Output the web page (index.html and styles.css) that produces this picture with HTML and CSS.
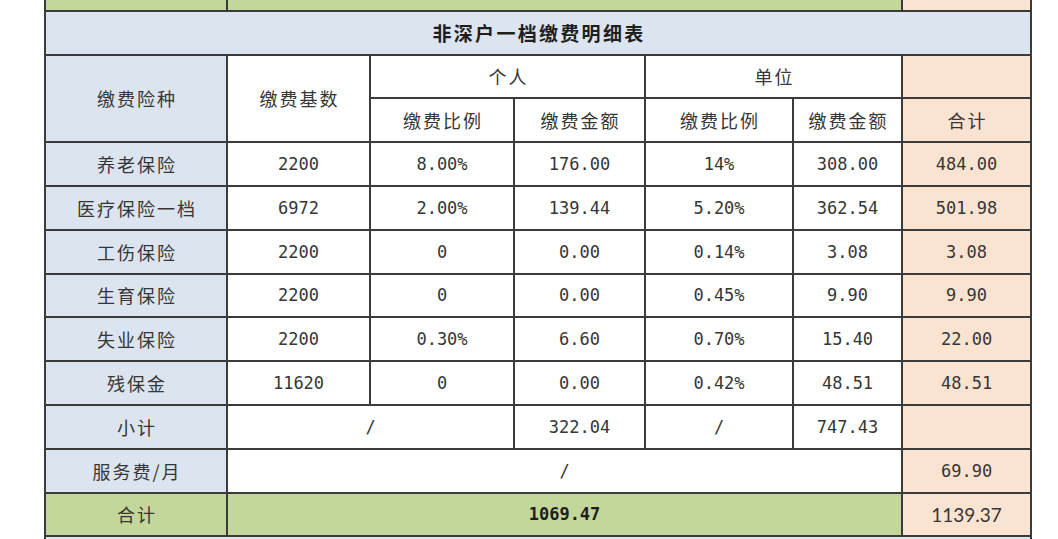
FILE: index.html
```html
<!DOCTYPE html>
<html lang="zh-CN">
<head>
<meta charset="utf-8">
<title>非深户一档缴费明细表</title>
<link rel="stylesheet" href="styles.css">
</head>
<body>
<div class="wrap">
<table class="fee">
  <colgroup>
    <col class="c1"><col class="c2"><col class="c3"><col class="c4"><col class="c5"><col class="c6"><col class="c7">
  </colgroup>
  <tr class="cut-top">
    <td class="green"></td>
    <td class="green" colspan="5"></td>
    <td class="peach"></td>
  </tr>
  <tr>
    <td class="blue title" colspan="7">非深户一档缴费明细表</td>
  </tr>
  <tr>
    <td class="blue cn" rowspan="2">缴费险种</td>
    <td class="cn" rowspan="2">缴费基数</td>
    <td class="cn" colspan="2">个人</td>
    <td class="cn" colspan="2">单位</td>
    <td class="peach"></td>
  </tr>
  <tr>
    <td class="cn">缴费比例</td>
    <td class="cn">缴费金额</td>
    <td class="cn">缴费比例</td>
    <td class="cn">缴费金额</td>
    <td class="peach cn">合计</td>
  </tr>
  <tr>
    <td class="blue cn">养老保险</td>
    <td class="num">2200</td><td class="num">8.00%</td><td class="num">176.00</td>
    <td class="num">14%</td><td class="num">308.00</td><td class="peach num">484.00</td>
  </tr>
  <tr>
    <td class="blue cn">医疗保险一档</td>
    <td class="num">6972</td><td class="num">2.00%</td><td class="num">139.44</td>
    <td class="num">5.20%</td><td class="num">362.54</td><td class="peach num">501.98</td>
  </tr>
  <tr>
    <td class="blue cn">工伤保险</td>
    <td class="num">2200</td><td class="num">0</td><td class="num">0.00</td>
    <td class="num">0.14%</td><td class="num">3.08</td><td class="peach num">3.08</td>
  </tr>
  <tr>
    <td class="blue cn">生育保险</td>
    <td class="num">2200</td><td class="num">0</td><td class="num">0.00</td>
    <td class="num">0.45%</td><td class="num">9.90</td><td class="peach num">9.90</td>
  </tr>
  <tr>
    <td class="blue cn">失业保险</td>
    <td class="num">2200</td><td class="num">0.30%</td><td class="num">6.60</td>
    <td class="num">0.70%</td><td class="num">15.40</td><td class="peach num">22.00</td>
  </tr>
  <tr>
    <td class="blue cn">残保金</td>
    <td class="num">11620</td><td class="num">0</td><td class="num">0.00</td>
    <td class="num">0.42%</td><td class="num">48.51</td><td class="peach num">48.51</td>
  </tr>
  <tr>
    <td class="blue cn">小计</td>
    <td class="num" colspan="2">/</td><td class="num">322.04</td>
    <td class="num">/</td><td class="num">747.43</td><td class="peach"></td>
  </tr>
  <tr>
    <td class="blue cn">服务费/月</td>
    <td class="num" colspan="5">/</td>
    <td class="peach num">69.90</td>
  </tr>
  <tr>
    <td class="green cn">合计</td>
    <td class="green num bold" colspan="5">1069.47</td>
    <td class="peach total">1139.37</td>
  </tr>
  <tr class="cut-bottom">
    <td class="blue" colspan="7"></td>
  </tr>
</table>
</div>
</body>
</html>
```

FILE: styles.css
```css
html, body {
  margin: 0;
  padding: 0;
  background: #ffffff;
  overflow: hidden;
}

.wrap {
  width: 1058px;
  height: 539px;
  overflow: hidden;
  padding-left: 44px;
  box-sizing: border-box;
}

.fee {
  border-collapse: collapse;
  table-layout: fixed;
  width: 986px;
  margin-top: -34px;
  color: #363636;
}

.c1 { width: 182px; }
.c2 { width: 143px; }
.c3 { width: 144px; }
.c4 { width: 131px; }
.c5 { width: 148px; }
.c6 { width: 109px; }
.c7 { width: 129px; }

.fee tr {
  height: 43.8px;
}

.fee td {
  border: 2px solid #3b3b3b;
  padding: 0;
  text-align: center;
  vertical-align: middle;
  background: #ffffff;
}

.fee td.blue { background: #dce4ef; }
.fee td.green { background: #c4d79b; }
.fee td.peach { background: #fbe3d2; }

.cn {
  font-family: "Noto Sans CJK SC", "Noto Sans", sans-serif;
  font-size: 18px;
  letter-spacing: 2px;
  text-indent: 2px;
  font-weight: 400;
}

.title {
  font-family: "Noto Sans CJK SC", "Noto Sans", sans-serif;
  font-size: 19px;
  font-weight: 700;
  letter-spacing: 2.3px;
  text-indent: 2px;
  color: #1e1e1e;
}

.num {
  font-family: "DejaVu Sans Mono", "Liberation Mono", monospace;
  font-size: 17px;
}

.bold {
  font-weight: 700;
  color: #1e1e1e;
}

.total {
  font-family: Lato, "Liberation Sans", sans-serif;
  font-size: 19px;
}
```
